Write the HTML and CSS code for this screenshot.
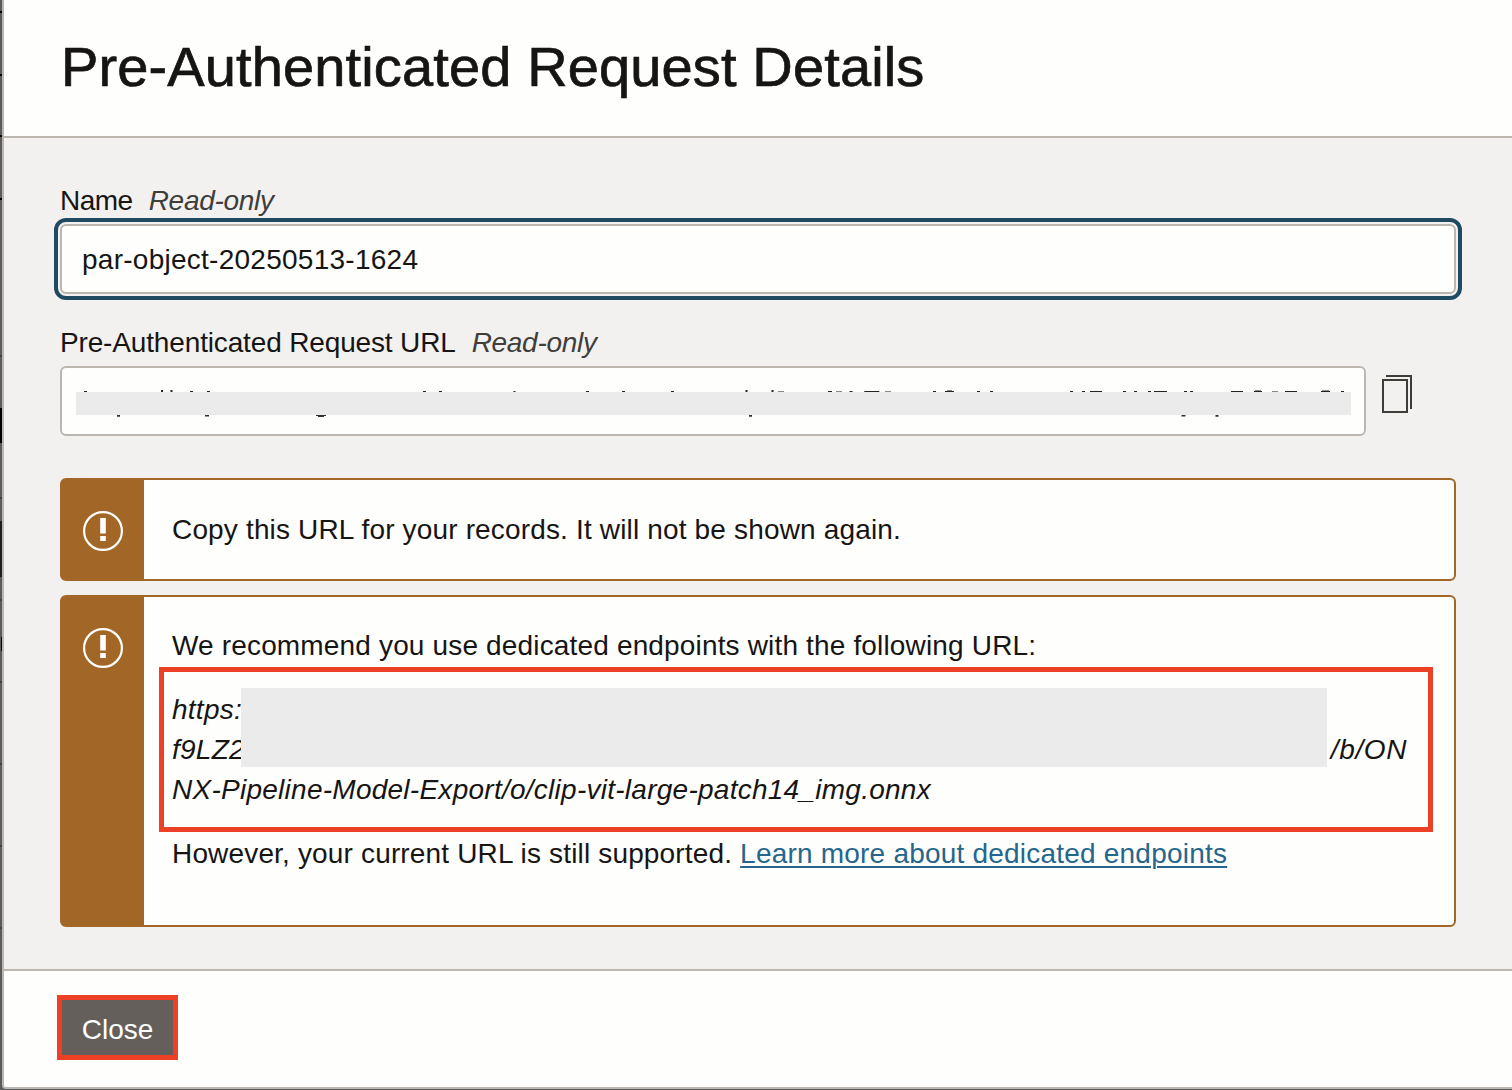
FILE: index.html
```html
<!DOCTYPE html>
<html lang="en">
<head>
<meta charset="utf-8">
<title>Pre-Authenticated Request Details</title>
<link rel="stylesheet" href="styles.css">
</head>
<body>
<div class="backdrop">
  <main class="dialog">
    <header class="dialog-header"><h1>Pre-Authenticated Request Details</h1></header>
    <section class="dialog-body">
      <div class="label"><span class="label-name">Name</span><em>Read-only</em></div>
      <div class="input focused">par-object-20250513-1624</div>
      <div class="label label-url"><span>Pre-Authenticated Request URL</span><em>Read-only</em></div>
      <div class="url-row">
        <div class="input url-input">
          <svg class="redacted" width="1275" height="28" viewBox="76 389 1275 28" aria-hidden="true">
            <path fill="#ebebeb" d="M76 392h1275v23H76z"/>
            <path fill="#252422" d="M84 391h3v1h-3zM161 390h2v2h-2zM170.500 390h2v2h-2zM190 391h3v1h-3zM207 391h3v1h-3zM423 391h3v1h-3zM439 391h3v1h-3zM513.500 391h2v1h-2zM586 391h3v1h-3zM622 391h3v1h-3zM671 391h3v1h-3zM745.500 390h2v2h-2zM771.500 390h2v2h-2zM828 391h4v1h-4zM849.500 391h3v1h-3zM864.300 391h15v1h-15zM933 391h3v1h-3zM945 391h9v1h-9zM977 391h3v1h-3zM990 391h3v1h-3zM1070 391h3v1h-3zM1082 391h3v1h-3zM1090 391h12v1h-12zM1123 391h3v1h-3zM1134 391h3v1h-3zM1148 391h3v1h-3zM1154 391h13v1h-13zM1184 391h3v1h-3zM1190 391h3v1h-3zM1231 391h12v1h-12zM1254 391h8v1h-8zM1285 391h12v1h-12zM1321 391h9v1h-9zM1341 391h3v1h-3z"/>
            <path fill="#8a8988" d="M778 391h6v1h-6zM836 391h6v1h-6zM885 391h6v1h-6zM947 390h5v1h-5zM1255 390h6v1h-6zM1272 391h6v1h-6zM1322 390h7v1h-7z"/>
            <path fill="#30302e" d="M117 415h3v1.700h-3zM205 415h4v1.500h-4zM316 415h10v1h-10zM318 416h6v1h-6zM749 415h3v1.700h-3zM1181.500 415h4v1.500h-4zM1215.500 415h3v1.700h-3z"/>
          </svg>
        </div>
        <svg class="copy" width="30" height="38" viewBox="0 0 30 38" fill="none" stroke="#403c38" stroke-width="2"><path d="M1 5h24v32H1zM4 1h25v33"/></svg>
      </div>
      <div class="alert">
        <div class="alert-icon"><svg width="40" height="40" viewBox="0 0 40 40"><circle cx="20" cy="20" r="18.900" fill="none" stroke="#fff" stroke-width="2.200"/><path fill="#fff" d="M17.200 7h5.600v15.500h-5.600zM17.200 25h5.600v5h-5.600z"/></svg></div>
        <p>Copy this URL for your records. It will not be shown again.</p>
      </div>
      <div class="alert alert-large">
        <div class="alert-icon"><svg width="40" height="40" viewBox="0 0 40 40"><circle cx="20" cy="20" r="18.900" fill="none" stroke="#fff" stroke-width="2.200"/><path fill="#fff" d="M17.200 7h5.600v15.500h-5.600zM17.200 25h5.600v5h-5.600z"/></svg></div>
        <div class="alert-text">
          <p>We recommend you use dedicated endpoints with the following URL:</p>
          <div class="highlight">
            <div class="mask"></div>
            <div>https:</div>
            <div class="split"><span>f9LZ2</span><span class="path-end">/b/ON</span></div>
            <div>NX-Pipeline-Model-Export/o/clip-vit-large-patch14_img.onnx</div>
          </div>
          <p>However, your current URL is still supported. <a href="#">Learn more about dedicated endpoints</a></p>
        </div>
      </div>
    </section>
    <footer class="dialog-footer"><button class="close" type="button">Close</button></footer>
  </main>
</div>
</body>
</html>
```
FILE: styles.css
```css
* { box-sizing: border-box; }
body { margin: 0; font: 28px/40px "Liberation Sans", Arial, sans-serif; color: #161513; overflow: hidden; }
h1, p { margin: 0; }
.backdrop {
  width: 1512px; height: 1090px; padding: 0 0 1px 2px; overflow: hidden;
  background:
    linear-gradient(#000, #000) 0 408px / 2px 35px no-repeat,
    linear-gradient(#211d1d, #211d1d) 0 521px / 2px 56px no-repeat,
    linear-gradient(#000, #000) 0 11px / 2px 2px no-repeat,
    linear-gradient(#000, #000) 0 74px / 2px 2px no-repeat,
    linear-gradient(#000, #000) 0 135px / 2px 2px no-repeat,
    linear-gradient(#000, #000) 0 198px / 2px 2px no-repeat,
    linear-gradient(#000, #000) 1px 637px / 1px 14px no-repeat,
    linear-gradient(#434343, #434343) 0 355px / 2px 2px no-repeat,
    linear-gradient(#434343, #434343) 0 497px / 2px 2px no-repeat,
    linear-gradient(#434343, #434343) 0 599px / 2px 2px no-repeat,
    linear-gradient(#434343, #434343) 0 681px / 2px 2px no-repeat,
    linear-gradient(#434343, #434343) 0 763px / 2px 2px no-repeat,
    linear-gradient(#434343, #434343) 0 845px / 2px 2px no-repeat,
    linear-gradient(#434343, #434343) 0 927px / 2px 2px no-repeat,
    #5b5b5d;
}
.dialog { width: 1514px; height: 1089px; display: flex; flex-direction: column; background: #fefefc; border: 2px solid #bcb6b1; border-top: 0; border-radius: 0 0 0 4px; }
.dialog-header { height: 138px; padding: 35px 0 0 57px; border-bottom: 2px solid #bcb6b1; }
h1 { font-size: 56px; line-height: 64px; font-weight: 400; letter-spacing: 0.13px; -webkit-text-stroke: 0.7px #161513; white-space: nowrap; }
.dialog-body { height: 833px; padding: 43px 0 0 56px; background: #f3f1f0; border-bottom: 2px solid #bcb6b1; }
.label { display: flex; gap: 16px; height: 43px; letter-spacing: -0.15px; white-space: nowrap; }
.label-name { letter-spacing: -0.5px; }
.label em { color: #403e3b; letter-spacing: -0.3px; }
.label-url { margin-top: 29px; }
.input { width: 1396px; height: 70px; padding: 14px 20px 0; background: #fefefc; border: 2px solid #bcb6b1; border-radius: 6px; letter-spacing: 0.26px; }
.focused { outline: 4px solid #204a61; outline-offset: 2px; }
.url-row { display: flex; gap: 16px; }
.url-input { width: 1306px; padding: 21px 14px; }
.redacted { display: block; }
.copy { margin-top: 9px; }
.alert { display: flex; width: 1396px; height: 103px; margin-top: 42px; background: #fefefc; border: 2px solid #a26626; border-radius: 6px; }
.alert-icon { width: 82px; flex: none; padding: 31px 0 0 21px; background: #a26626; }
.alert-icon svg { display: block; }
.alert p { letter-spacing: 0.16px; white-space: nowrap; }
.alert > p { padding: 30px 0 0 28px; }
.alert-large { height: 332px; margin-top: 14px; }
.alert-text { padding: 29px 0 0 28px; }
.highlight { position: relative; width: 1274px; height: 165px; margin: 1px 0 2px -13px; padding: 18px 21px 0 8px; border: 5px solid #ec4027; font-style: italic; letter-spacing: 0.26px; white-space: nowrap; }
.mask { position: absolute; left: 77px; top: 16px; width: 1086px; height: 79px; background: #ebebeb; }
.split { display: flex; justify-content: space-between; }
.path-end { letter-spacing: 0.6px; }
a { color: #26668c; letter-spacing: 0.21px; text-decoration-thickness: 2px; text-underline-offset: 3px; }
.dialog-footer { flex: 1; padding: 24px 0 0 53px; }
.close { display: block; width: 121px; height: 65px; padding: 5px 0 0; font: inherit; line-height: 40px; color: #fff; background: #655f5b; border: 5px solid #ec4027; }
```
